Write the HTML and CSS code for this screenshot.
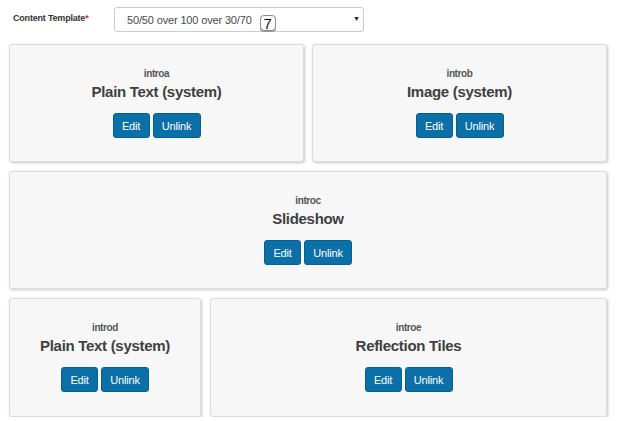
FILE: index.html
```html
<!DOCTYPE html>
<html>
<head>
<meta charset="utf-8">
<link rel="stylesheet" href="styles.css">
</head>
<body>
<div class="page">
  <div class="header">
    <label class="field-label">Content Template<span class="req">*</span></label>
    <div class="select">
      <span class="select-text">50/50 over 100 over 30/70</span>
      <span class="key">7</span>
      <span class="caret">&#9660;</span>
    </div>
  </div>
  <div class="rows">
    <div class="row row-half">
      <div class="card">
        <div class="name">introa</div>
        <div class="title">Plain Text (system)</div>
        <div class="actions"><button class="btn btn-edit">Edit</button><button class="btn btn-unlink">Unlink</button></div>
      </div>
      <div class="card">
        <div class="name">introb</div>
        <div class="title">Image (system)</div>
        <div class="actions"><button class="btn btn-edit">Edit</button><button class="btn btn-unlink">Unlink</button></div>
      </div>
    </div>
    <div class="row row-full">
      <div class="card">
        <div class="name">introc</div>
        <div class="title">Slideshow</div>
        <div class="actions"><button class="btn btn-edit">Edit</button><button class="btn btn-unlink">Unlink</button></div>
      </div>
    </div>
    <div class="row row-third">
      <div class="card">
        <div class="name">introd</div>
        <div class="title">Plain Text (system)</div>
        <div class="actions"><button class="btn btn-edit">Edit</button><button class="btn btn-unlink">Unlink</button></div>
      </div>
      <div class="card">
        <div class="name">introe</div>
        <div class="title">Reflection Tiles</div>
        <div class="actions"><button class="btn btn-edit">Edit</button><button class="btn btn-unlink">Unlink</button></div>
      </div>
    </div>
  </div>
</div>
</body>
</html>
```

FILE: styles.css
```css
html, body {
  margin: 0;
  padding: 0;
  background: #ffffff;
  font-family: "Liberation Sans", Arial, sans-serif;
}

.page {
  width: 620px;
}

.header {
  display: flex;
  align-items: center;
  padding: 7px 0 0 13px;
}

.field-label {
  width: 101px;
  font-size: 9px;
  font-weight: bold;
  color: #333333;
  letter-spacing: -0.2px;
  align-self: flex-start;
  margin-top: 6px;
}

.req {
  color: #d9302c;
}

.select {
  position: relative;
  box-sizing: border-box;
  width: 250px;
  height: 25px;
  border: 1px solid #cccccc;
  border-radius: 3px;
  background: #ffffff;
  display: flex;
  align-items: center;
  padding-left: 12px;
}

.select-text {
  font-size: 11px;
  color: #4a4a4a;
  letter-spacing: -0.15px;
}

.key {
  box-sizing: border-box;
  display: inline-flex;
  align-items: center;
  justify-content: center;
  width: 16px;
  height: 16px;
  margin-left: 8px;
  margin-top: 7px;
  border: 1px solid #8a8a8a;
  border-radius: 4px;
  box-shadow: 0 1px 0 #9a9a9a;
  font-size: 15px;
  color: #111111;
  background: #ffffff;
  line-height: 1;
}

.caret {
  position: absolute;
  right: 3px;
  top: 7px;
  font-size: 7px;
  color: #222222;
}

.rows {
  margin-top: 12px;
  padding-left: 9px;
  width: 598px;
  display: flex;
  flex-direction: column;
  gap: 9px;
}

.row {
  display: flex;
}

.row-half {
  gap: 8px;
}

.row-half .card {
  flex: 1 1 0;
}

.row-full .card {
  flex: 1 1 auto;
}

.row-third {
  gap: 9px;
}

.row-third .card:first-child {
  flex: 0 0 192px;
}

.row-third .card:last-child {
  flex: 1 1 auto;
}

.row-third .card {
  height: 119px;
}

.card {
  box-sizing: border-box;
  height: 118px;
  background: #f7f7f7;
  border: 1px solid #dcdcdc;
  border-radius: 3px;
  box-shadow: 1px 1px 3px rgba(0, 0, 0, 0.22);
  display: flex;
  flex-direction: column;
  align-items: center;
  padding-top: 23px;
}

.name {
  font-size: 10px;
  line-height: 12px;
  font-weight: bold;
  color: #555555;
  letter-spacing: -0.4px;
}

.title {
  margin-top: 2px;
  font-size: 15px;
  line-height: 20px;
  font-weight: bold;
  color: #3f3f3f;
  letter-spacing: -0.3px;
}

.actions {
  margin-top: 11px;
  display: flex;
  gap: 3px;
}

.btn {
  box-sizing: border-box;
  height: 25px;
  padding: 0;
  border: 1px solid #0a5f92;
  border-radius: 3px;
  background: #0b6fa8;
  color: #ffffff;
  font-family: "Liberation Sans", Arial, sans-serif;
  font-size: 11px;
  letter-spacing: -0.2px;
}

.btn-edit {
  width: 37px;
}

.btn-unlink {
  width: 48px;
}
```
